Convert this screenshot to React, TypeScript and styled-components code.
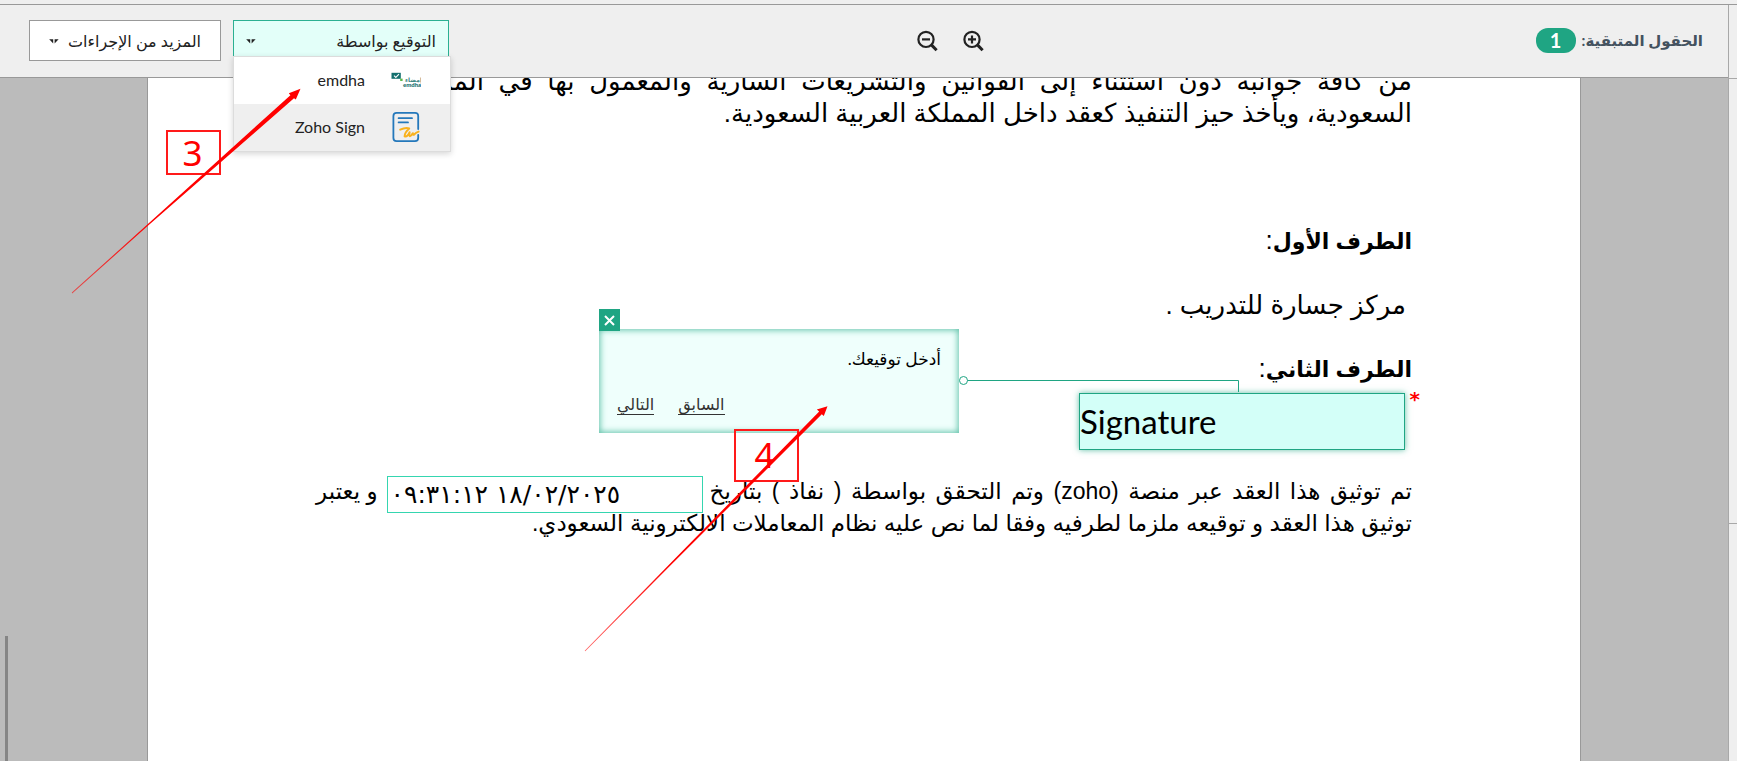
import React from "react";
import styled, { createGlobalStyle, css } from "styled-components";

const GREEN = "#1fa583";
const LINE = "#999999";

const GlobalStyle = createGlobalStyle`
  *, *::before, *::after { box-sizing: border-box; }
  body { margin: 0; }
  button, input { font: inherit; color: inherit; margin: 0; }
`;

const Shell = styled.div`
  position: relative;
  display: flex;
  flex-direction: column;
  height: 100vh;
  overflow: hidden;
  background: #efefef;
  color: #222;
  font-family: Lato, "DejaVu Sans", sans-serif;
  font-size: 16px;
`;

const TopEdge = styled.div`
  flex: none;
  height: 5px;
  border-bottom: 1px solid ${LINE};
`;

const Body = styled.div`
  display: flex;
  flex: 1;
  min-height: 0;
`;

const SidePanel = styled.aside`
  flex: none;
  display: flex;
  flex-direction: column;
  width: 9px;
  border-left: 1px solid #a8a8a8;
`;

const SideCell = styled.div<{ $height: number }>`
  height: ${(p) => p.$height}px;
  border-bottom: 1px solid #a8a8a8;
`;

const Main = styled.main`
  display: flex;
  flex: 1;
  flex-direction: column;
  min-width: 0;
`;

const Toolbar = styled.header`
  flex: none;
  display: grid;
  grid-template-columns: 17fr auto 21fr;
  align-items: center;
  height: 73px;
  padding: 0 25px 2px 29px;
  border-bottom: 1px solid ${LINE};
`;

const Status = styled.div`
  display: flex;
  align-items: center;
  gap: 6px;
  color: #44525f;
  font-size: 15px;
  font-weight: 700;
`;

const Count = styled.span`
  width: 40px;
  height: 25px;
  border-radius: 12px;
  background: ${GREEN};
  color: #fff;
  font-size: 20px;
  line-height: 25px;
  text-align: center;
`;

const ZoomGroup = styled.div`
  display: flex;
  gap: 25px;
  padding-top: 2px;
`;

const IconButton = styled.button`
  display: block;
  width: 21px;
  height: 22px;
  padding: 0;
  border: 0;
  background: none;
`;

const Actions = styled.div`
  display: flex;
  justify-content: flex-end;
  gap: 12px;
`;

const MenuAnchor = styled.div`
  position: relative;
`;

const ActionButton = styled.button<{ $active?: boolean }>`
  display: flex;
  align-items: center;
  justify-content: space-between;
  width: ${(p) => (p.$active ? 216 : 192)}px;
  height: 41px;
  padding: 2px ${(p) => (p.$active ? 12 : 19)}px 0;
  border: 1px solid ${(p) => (p.$active ? "#2bb092" : LINE)};
  background: ${(p) => (p.$active ? "#e3fff9" : "#fff")};
  font-size: 16px;
`;

const Menu = styled.ul`
  position: absolute;
  z-index: 5;
  top: 36px;
  left: 0;
  width: 218px;
  margin: 0;
  padding: 0;
  border: 1px solid #dcdcdc;
  background: #fff;
  box-shadow: 0 2px 6px rgba(0, 0, 0, 0.16);
  list-style: none;
`;

const MenuItem = styled.button<{ $hover?: boolean }>`
  display: flex;
  align-items: center;
  gap: 26px;
  width: 100%;
  height: 47px;
  padding: 0 29px;
  border: 0;
  background: ${(p) => (p.$hover ? "#efefef" : "#fff")};
  font-size: 16px;
`;

const LogoSlot = styled.span`
  display: flex;
  justify-content: center;
  width: 30px;
`;

const MenuLabel = styled.span`
  padding-bottom: 2px;
`;

const Workspace = styled.div`
  position: relative;
  display: flex;
  flex: 1;
  min-height: 0;
  overflow: hidden;
  padding: 0 147px;
  background: #bbbbbb;
`;

const ScrollThumb = styled.div`
  position: absolute;
  left: 5px;
  bottom: 0;
  width: 3px;
  height: 125px;
  background: #858585;
`;

const Sheet = styled.article`
  flex: 1;
  min-width: 0;
  padding: 0 168px;
  border: solid ${LINE};
  border-width: 0 1px;
  background: #fff;
  color: #000;
  font-family: "Liberation Sans", "DejaVu Sans", sans-serif;
  font-size: 26px;
  line-height: 32px;
`;

const Clause = styled.p`
  margin: -13px 0 95px;
`;

const FullLine = styled.span`
  display: block;
  white-space: nowrap;
  text-align: justify;
  text-align-last: justify;
`;

const Party = styled.p<{ $inset?: boolean }>`
  margin: 0 0 31px;
  padding-right: ${(p) => (p.$inset ? 6 : 0)}px;

  strong {
    font-size: 22px;
  }
`;

const SignArea = styled.div`
  position: relative;
  width: 326px;
  margin: -24px 7px 25px;
`;

const SignField = styled.button`
  display: block;
  width: 100%;
  height: 57px;
  padding: 0;
  border: 1px solid ${GREEN};
  background: #d3fff8;
  box-shadow: 0 0 6px rgba(31, 165, 131, 0.7);
  direction: ltr;
  font-family: Lato, sans-serif;
  font-size: 33px;
  line-height: 55px;
  text-align: left;
`;

const Required = styled.span`
  position: absolute;
  top: -6px;
  right: -15px;
  color: #f00;
  font-family: "DejaVu Sans", sans-serif;
  font-size: 20px;
  font-weight: 700;
  line-height: 24px;
`;

const Connector = styled.svg`
  position: absolute;
  top: -18px;
  left: -121px;
  width: 282px;
  height: 18px;
`;

const Hint = styled.section`
  position: absolute;
  top: -64px;
  left: -480px;
  display: flex;
  flex-direction: column;
  justify-content: space-between;
  width: 360px;
  height: 104px;
  padding: 16px 18px 18px;
  background: #effffc;
  box-shadow: inset 0 0 6px 1px rgba(31, 165, 131, 0.7);
  font-family: Lato, "DejaVu Sans", sans-serif;
  font-size: 17px;
  line-height: 28px;
`;

const HintText = styled.p`
  margin: 0;
`;

const HintLinks = styled.nav`
  display: flex;
  justify-content: flex-end;
  gap: 24px;
  font-size: 16px;
  line-height: 20px;
`;

const HintLink = styled.a`
  border-bottom: 1px solid #333;
  color: #333;
  text-decoration: none;
`;

const CloseButton = styled.button`
  position: absolute;
  top: -20px;
  left: 0;
  display: grid;
  place-items: center;
  width: 21px;
  height: 22px;
  padding: 0;
  border: 0;
  background: ${GREEN};
`;

const Closing = styled.p`
  margin: 0;
  font-size: 23px;
`;

const FieldLine = styled.span`
  display: flex;
  align-items: center;
  height: 32px;
  white-space: nowrap;
`;

const Stretch = styled.span`
  flex: 1;
  text-align-last: justify;
`;

const DateField = styled.input`
  flex: none;
  width: 316px;
  height: 37px;
  margin: 6px 7px 0 9px;
  padding: 0 3px;
  border: 1px solid #35d6b0;
  background: #fff;
  direction: ltr;
  unicode-bidi: bidi-override;
  font-family: "DejaVu Sans", sans-serif;
  font-size: 25px;
`;

const Annotations = styled.div`
  position: absolute;
  z-index: 10;
  inset: 0;
  direction: ltr;
  pointer-events: none;
`;

const Arrows = styled.svg`
  position: absolute;
  top: 0;
  left: 0;
  width: 100%;
  height: 100%;
`;

const step = css`
  position: absolute;
  border: 2px solid #ff1a1a;
  color: #f00;
  font-family: "Noto Sans", sans-serif;
  font-size: 35px;
  font-weight: 400;
  text-align: center;
`;

const StepThree = styled.span`
  ${step}
  top: 130px;
  left: 166px;
  width: 55px;
  height: 45px;
  padding-right: 2px;
  line-height: 41px;
`;

const StepFour = styled.span`
  ${step}
  top: 429px;
  left: 734px;
  width: 65px;
  height: 53px;
  padding-right: 4px;
  line-height: 47px;
`;

function Magnifier({ plus }: { plus?: boolean }) {
  return (
    <svg width="21" height="22" viewBox="0 0 21 22" fill="none" stroke="#222" strokeWidth="2.2" aria-hidden="true">
      <circle cx="9" cy="9.4" r="7.6" />
      <path d="M14.2 14.6 L19.6 20.2" strokeWidth="3" />
      <path d={plus ? "M5 9.4H13 M9 5.4V13.4" : "M5 9.4H13"} />
    </svg>
  );
}

function Caret() {
  return (
    <svg width="10" height="5" viewBox="0 0 10 5" fill="#222" aria-hidden="true">
      <path d="M0.2 0.2H4.2V4.4Z" />
      <path d="M5.6 0.2H9.6L5.6 4.4Z" />
    </svg>
  );
}

function EmdhaLogo() {
  return (
    <svg width="30" height="16" viewBox="0 0 30 16" aria-hidden="true">
      <rect x="0.5" y="0.8" width="9.3" height="6" fill="#14706f" />
      <path d="M3 3.6L4.8 5.4L8 2.2" stroke="#fff" strokeWidth="1.1" fill="none" />
      <rect x="9.2" y="6.6" width="2.4" height="2.4" fill="#5bb948" />
      <text x="14" y="9.6" fontFamily="DejaVu Sans" fontWeight="700" fontSize="6" fill="#3d8683" direction="ltr">إمضاء</text>
      <text x="12" y="15" fontFamily="Lato" fontWeight="900" fontSize="6" fill="#17706f" direction="ltr">emdha</text>
    </svg>
  );
}

function ZohoSignLogo() {
  return (
    <svg width="28" height="32" viewBox="0 0 28 32" fill="none" strokeLinecap="round" strokeLinejoin="round" aria-hidden="true">
      <path d="M26.2 18V5Q26.2 1.8 23 1.8H4.6Q1.4 1.8 1.4 5V27Q1.4 30.2 4.6 30.2H23Q26.2 30.2 26.2 27V24" stroke="#2478bb" strokeWidth="1.8" />
      <path d="M6.6 7.2H20 M6.6 11.4H16" stroke="#2478bb" strokeWidth="1.8" />
      <path d="M8.2 18.6C10.8 17.4 15 16.6 17.2 17.4C15 19.4 12.4 22 12.6 25.4C14.4 26 16.4 24 17.6 21.2C17.2 23.4 17 25 18 25.2C19.2 25.2 20 23.6 20.8 22.2C20.8 23.8 21.4 24.2 22.4 23.2C23.4 22.2 24.6 21.4 26.6 20.6" stroke="#f9b21d" strokeWidth="2" />
    </svg>
  );
}

export default function App() {
  return (
    <Shell dir="rtl" lang="ar">
      <GlobalStyle />
      <TopEdge />
      <Body>
        <SidePanel>
          <SideCell $height={74} />
          <SideCell $height={445} />
        </SidePanel>
        <Main>
          <Toolbar>
            <Status>
              <span>الحقول المتبقية:</span>
              <Count>1</Count>
            </Status>
            <ZoomGroup>
              <IconButton type="button" aria-label="تكبير"><Magnifier plus /></IconButton>
              <IconButton type="button" aria-label="تصغير"><Magnifier /></IconButton>
            </ZoomGroup>
            <Actions>
              <MenuAnchor>
                <ActionButton type="button" $active aria-haspopup="menu" aria-expanded="true">
                  <span>التوقيع بواسطة</span>
                  <Caret />
                </ActionButton>
                <Menu>
                  <li>
                    <MenuItem type="button">
                      <LogoSlot><EmdhaLogo /></LogoSlot>
                      <MenuLabel>emdha</MenuLabel>
                    </MenuItem>
                  </li>
                  <li>
                    <MenuItem type="button" $hover>
                      <LogoSlot><ZohoSignLogo /></LogoSlot>
                      <MenuLabel>Zoho Sign</MenuLabel>
                    </MenuItem>
                  </li>
                </Menu>
              </MenuAnchor>
              <ActionButton type="button" aria-haspopup="menu">
                <span>المزيد من الإجراءات</span>
                <Caret />
              </ActionButton>
            </Actions>
          </Toolbar>
          <Workspace>
            <Sheet>
              <Clause>
                <FullLine>من كافة جوانبه دون استثناء إلى القوانين والتشريعات السارية والمعمول بها في المملكة العربية</FullLine>
                السعودية، ويأخذ حيز التنفيذ كعقد داخل المملكة العربية السعودية.
              </Clause>
              <Party><strong>الطرف الأول</strong>:</Party>
              <Party $inset>مركز جسارة للتدريب .</Party>
              <Party><strong>الطرف الثاني</strong>:</Party>
              <SignArea>
                <SignField type="button">Signature</SignField>
                <Required>*</Required>
                <Connector viewBox="0 0 282 18" fill="none" stroke={GREEN} aria-hidden="true">
                  <circle cx="5.5" cy="5.5" r="4" fill="#fff" />
                  <path d="M9.5 5.5H280.5V17" />
                </Connector>
                <Hint>
                  <CloseButton type="button" aria-label="إغلاق">
                    <svg width="11" height="11" viewBox="0 0 11 11" stroke="#fff" strokeWidth="2" aria-hidden="true">
                      <path d="M1 1L10 10M10 1L1 10" />
                    </svg>
                  </CloseButton>
                  <HintText>أدخل توقيعك.</HintText>
                  <HintLinks>
                    <HintLink href="#previous">السابق</HintLink>
                    <HintLink href="#next">التالي</HintLink>
                  </HintLinks>
                </Hint>
              </SignArea>
              <Closing>
                <FieldLine>
                  <Stretch>تم توثيق هذا العقد عبر منصة (zoho) وتم التحقق بواسطة ( نفاذ ) بتاريخ</Stretch>
                  <DateField aria-label="تاريخ التوقيع" readOnly value="٠٩:٣١:١٢ ١٨/٠٢/٢٠٢٥" />
                  <span>و يعتبر</span>
                </FieldLine>
                توثيق هذا العقد و توقيعه ملزما لطرفيه وفقا لما نص عليه نظام المعاملات الالكترونية السعودي.
              </Closing>
            </Sheet>
            <ScrollThumb />
          </Workspace>
        </Main>
      </Body>
      <Annotations>
        <StepThree>3</StepThree>
        <StepFour>4</StepFour>
        <Arrows aria-hidden="true">
          <defs>
            <linearGradient id="fadeThree" gradientUnits="userSpaceOnUse" x1="72" y1="293" x2="300" y2="89">
              <stop offset="0" stopColor="#f00" stopOpacity="0.6" />
              <stop offset="0.35" stopColor="#f00" />
            </linearGradient>
            <linearGradient id="fadeFour" gradientUnits="userSpaceOnUse" x1="585" y1="651" x2="827" y2="406">
              <stop offset="0" stopColor="#f00" stopOpacity="0.6" />
              <stop offset="0.35" stopColor="#f00" />
            </linearGradient>
          </defs>
          <path d="M71.8 292.6L147.3 224.6L290.4 95.2L288.8 93.2L300.5 88.8L295.8 99.6L294 98.2L148.2 225.6L72.2 293.4Z" fill="url(#fadeThree)" />
          <path d="M584.7 650.7L664.3 569.4L819.2 411.6L816.8 409.4L827.5 406.2L823.8 416L821.8 414.2L665.4 570.6L585.3 651.3Z" fill="url(#fadeFour)" />
        </Arrows>
      </Annotations>
    </Shell>
  );
}
